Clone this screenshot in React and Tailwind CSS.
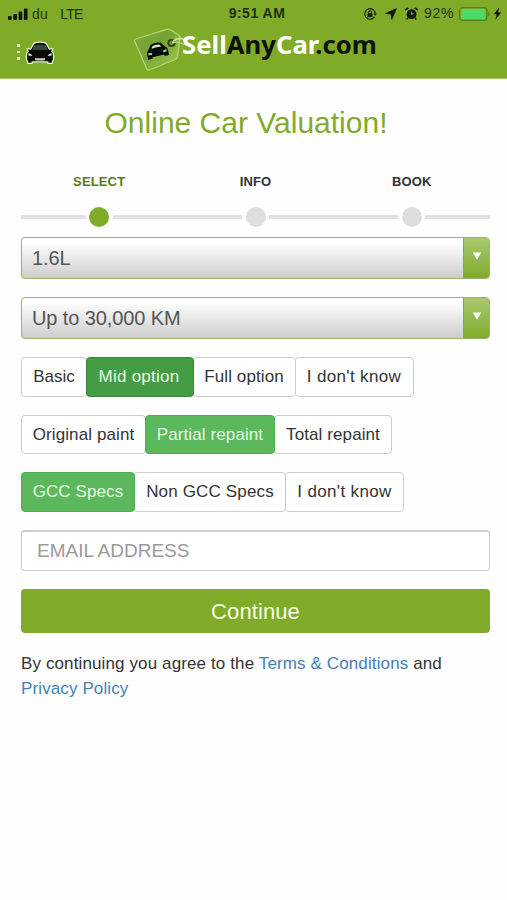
import { useState } from 'react'

const STEPS = ['SELECT', 'INFO', 'BOOK'];

const OPTION_GROUPS = [
    {
        id: 'trim',
        items: [
            { label: 'Basic', width: 'w-[66px]' },
            { label: 'Mid option', width: 'w-[108px] tracking-[0.25px] -indent-[2px]' },
            { label: 'Full option', width: 'w-[103px] tracking-[0.1px] -indent-[1px]' },
            { label: "I don't know", width: 'w-[119px] tracking-[0.35px] -indent-[1px]' },
        ],
        active: 'relative z-10 border-[#398439] bg-[#449d44] text-[#e6f9e0]',
    },
    {
        id: 'paint',
        items: [
            { label: 'Original paint', width: 'w-[125px] tracking-[0.1px]' },
            { label: 'Partial repaint', width: 'w-[130px] tracking-[0.1px]' },
            { label: 'Total repaint', width: 'w-[118px] tracking-[0.1px]' },
        ],
        active: 'relative z-10 border-[#4cae4c] bg-[#5cb85c] text-[#e6f9e0]',
    },
    {
        id: 'specs',
        items: [
            { label: 'GCC Specs', width: 'w-[114px] tracking-[0.1px]' },
            { label: 'Non GCC Specs', width: 'w-[152px] tracking-[0.15px]' },
            { label: "I don't know", width: 'w-[119px] tracking-[0.35px]' },
        ],
        active: 'relative z-10 border-[#4cae4c] bg-[#5cb85c] text-[#e6f9e0]',
    },
];

const StatusBar = () => (
    <div className="relative flex h-[27px] items-center text-[14px] text-[#20310a]">
        <svg className="ml-[8px] mt-px" width="20" height="12" viewBox="0 0 20 12" fill="#0d1503">
            <rect x="0" y="8" width="3.6" height="4" rx="1" />
            <rect x="5.3" y="6" width="3.6" height="6" rx="1" />
            <rect x="10.6" y="3.5" width="3.6" height="8.5" rx="1" />
            <rect x="15.9" y="0.5" width="3.6" height="11.5" rx="1" />
        </svg>
        <span className="ml-[4px] mt-px tracking-[0.3px]">du</span>
        <span className="ml-[12px] mt-px text-[14px] tracking-[-0.8px]">LTE</span>
        <span className="absolute inset-x-0 top-[3px] pl-[7px] text-center text-[14px] font-bold leading-[21px] tracking-[0.5px]">9:51 AM</span>

        <div className="ml-auto flex items-center pr-[5px]">
            {/* rotation lock */}
            <svg width="14" height="14" viewBox="0 0 14 14" fill="none" stroke="#16220a" strokeWidth="1.2">
                <path d="M11.4 9.9A5.3 5.3 0 1 1 12.3 6.6" />
                <path d="M10.4 6.4h3.4l-1.7 2.3z" fill="#16220a" stroke="none" />
                <path d="M5.5 6.5V5.2a1.5 1.5 0 0 1 3 0v1.3" strokeWidth="1" />
                <rect x="4.5" y="6.2" width="5" height="3.8" rx="0.5" fill="#16220a" stroke="none" />
            </svg>
            {/* location */}
            <svg className="ml-[8px]" width="12" height="12" viewBox="0 0 12 12" fill="#0d1503" stroke="#0d1503" strokeWidth="0.7" strokeLinejoin="round">
                <path d="M11.4 0.6 6.8 11.4 6 6 0.6 5.4z" />
            </svg>
            {/* alarm */}
            <svg className="ml-[8px]" width="13" height="13" viewBox="0 0 13 13" fill="#0d1503">
                <circle cx="6.5" cy="7.2" r="4.9" />
                <path d="M0.5 3.7A2.2 2.2 0 0 1 4 1.2zM12.5 3.7A2.2 2.2 0 0 0 9 1.2z" />
                <path d="M2.9 10.6 1.9 12.5M10.1 10.6l1 1.9" stroke="#0d1503" strokeWidth="1.4" />
                <path d="M6.5 4.5V7.5L8.5 6.5" fill="none" stroke="#80ab29" strokeWidth="1" />
            </svg>
            <span className="ml-[6px] w-[31px] whitespace-nowrap text-[14px] tracking-[0.7px]">92%</span>
            <svg className="ml-[4px]" width="31" height="14" viewBox="0 0 31 14">
                <rect x="0.7" y="0.7" width="27" height="12.6" rx="2.5" fill="none" stroke="#57801b" strokeWidth="1.3" />
                <rect x="2" y="2" width="24.4" height="10" rx="1.2" fill="#4fdb63" />
                <path d="M28.9 4.6a2.6 2.6 0 0 1 0 4.8z" fill="#57801b" />
            </svg>
            <svg className="ml-[3px]" width="9" height="13" viewBox="0 0 8 13" fill="#0d1503">
                <path d="M5.6 0.5 0.2 7.2h3L2 12.5 7.8 5.5H4.7z" />
            </svg>
        </div>
    </div>
);

const CarIcon = () => (
    <svg width="30" height="24" viewBox="0 0 30 24">
        <path
            d="M8.200 3.300Q9.500 1.200 15 1.200T21.800 3.300L24.400 8.200 26.200 7.500Q28 7.600 27.600 9.300L26.800 10.200Q28.500 11.500 28.500 14V18.500Q28.500 20 27.400 20.200V22.300H22.800V20.900H7.200V22.300H2.600V20.200Q1.500 20 1.500 18.500V14Q1.500 11.500 3.200 10.200L2.400 9.300Q2 7.600 3.800 7.500L5.600 8.200z"
            fill="#080a08"
            stroke="#e8f5cf"
            strokeWidth="1.300"
            strokeLinejoin="round"
        />
        <path d="M9.200 4.500Q15 2.500 20.800 4.500L23 9H7z" fill="#33483d" />
        <path d="M3.200 12.300q3.200.3 4.300 2.500l-3.900-.1zM26.800 12.300q-3.200.3-4.300 2.500l3.900-.1z" fill="#dcebc8" />
        <path d="M9.800 17.300h10.400l-.8 2.200h-8.800z" fill="#c9d8c2" />
    </svg>
);

const TagLogo = () => (
    <svg className="shrink-0" width="60" height="46" viewBox="0 0 60 46">
        <defs>
            <linearGradient id="tag" x1="0" y1="0" x2="1" y2="1">
                <stop offset="0" stopColor="#7fa93a" />
                <stop offset="0.45" stopColor="#75a333" />
                <stop offset="1" stopColor="#a4cb55" />
            </linearGradient>
        </defs>
        <path
            d="M2.8 12 33.5 2.3q2-.6 3.6.4l8.3 5q1.7 1.2 1.5 3.2l-2.5 18.8q-.3 2-2.2 2.8L16.5 43q-1.9.7-2.7-1.1L1.700 14.200q-.7-1.600 1.100-2.200z"
            fill="url(#tag)"
            stroke="#b3d373"
            strokeWidth="1.3"
        />
        <g transform="translate(11 18) rotate(-13) scale(0.77)">
            <path d="M4 8 8 2Q15-1 22 2l4 6q3 1.500 3 5v7h-6v-2H7v2H1v-7q0-3.500 3-5z" fill="#080c06" />
            <path d="M8.500 7 10.500 3.800q4.500-1.400 9 0l2 3.200Q15 5.800 8.500 7z" fill="#d9e8c0" />
            <path d="M3 11.500l5 1.200-1 2.300-4-.8zM27 11.500l-5 1.200 1 2.300 4-.8z" fill="#bed697" />
        </g>
        <circle cx="38.5" cy="16" r="3.2" fill="#718f38" stroke="#2d4413" strokeWidth="1.8" />
        <path d="M39.5 16C43 9.500 51 10.500 54.500 16" fill="none" stroke="#c8dca0" strokeWidth="1.8" />
        <path d="M40.5 16C46 12.500 51 20 58 18.500" fill="none" stroke="#b9d386" strokeWidth="1.3" />
    </svg>
);

const Header = () => (
    <header className="h-[79px] border-b border-[#a9c66e] bg-[#80ab29]">
        <StatusBar />
        <div className="flex items-start">
            <div className="ml-[17px] mt-[17px] flex flex-col gap-[4px]">
                <div className="h-[2.5px] w-[2.5px] bg-[#e4f3c4]"></div>
                <div className="h-[2.5px] w-[2.5px] bg-[#e4f3c4]"></div>
                <div className="h-[2.5px] w-[2.5px] bg-[#e4f3c4]"></div>
            </div>
            <div className="ml-[5.5px] mt-[14px]"><CarIcon /></div>
            <div className="ml-[78px] flex items-start">
                <TagLogo />
                <div className="-ml-[11px] mt-px whitespace-nowrap font-['Noto_Sans'] text-[25.7px] font-bold leading-[33px] text-[#0c1206]">
                    <span className="text-white">Sell</span>Any<span className="text-white">Car</span>.com
                </div>
            </div>
        </div>
    </header>
);

const Stepper = ({ current }) => (
    <div className="grid grid-cols-3">
        {STEPS.map((step, i) => (
            <div key={step} className="flex flex-col items-center">
                <div className={`text-[13px] font-bold leading-[18px] tracking-[0.15px] ${i === current ? 'text-[#587d18]' : 'text-[#333333]'}`}>{step}</div>
                <div className="mt-[16px] flex w-full items-center">
                    <div className="h-[4px] flex-1 bg-[#e0e0e0]"></div>
                    <div className={`mx-[3.5px] h-[20px] w-[20px] rounded-full ${i === current ? 'bg-[#80ab29]' : 'bg-[#dedede]'}`}></div>
                    <div className="h-[4px] flex-1 bg-[#e0e0e0]"></div>
                </div>
            </div>
        ))}
    </div>
);

const SelectBox = ({ value }) => (
    <div className="flex h-[42px] overflow-hidden rounded-[4px] border border-[#98b568] bg-linear-to-b from-white from-10% to-[#cdcdcd]">
        <div className="flex-1 pl-[10px] text-[20px] leading-[41px] tracking-[-0.1px] text-[#555555]">{value}</div>
        <div className="flex w-[26px] justify-center border-l border-[#86a550] bg-linear-to-b from-[#a9c96d] to-[#80ab29] pt-[14px]">
            <svg width="10" height="8" viewBox="0 0 10 8"><path d="M0.8 0.5h8.4L5 7.8z" fill="#ffffff" /></svg>
        </div>
    </div>
);

const OptionGroup = ({ group, selected, onSelect }) => (
    <div className="flex h-[39.5px] pl-px">
        {group.items.map((item) => (
            <button
                key={item.label}
                type="button"
                onClick={() => onSelect(item.label)}
                className={`${item.width} -ml-px shrink-0 whitespace-nowrap rounded-[4px] border text-[17px] leading-[37px] ${selected === item.label ? group.active : 'border-[#cccccc] bg-white text-[#333333]'}`}
            >
                {item.label}
            </button>
        ))}
    </div>
);

const App = () => {
    const [options, setOptions] = useState({
        trim: 'Mid option',
        paint: 'Partial repaint',
        specs: 'GCC Specs',
    });
    const [email, setEmail] = useState('');

    return (
        <div className="h-[900px] w-[507px] overflow-hidden bg-[#fefefe] font-['Liberation_Sans',sans-serif] text-[#333333]">
            <Header />

            <main className="pl-[21px] pr-[17px]">
                <h1 className="pr-[19px] pt-[26px] text-center text-[30px] leading-[36px] text-[#80ab29]">Online Car Valuation!</h1>

                <div className="mt-[32px]">
                    <Stepper current={0} />
                </div>

                <div className="mt-[10px] flex flex-col gap-[18px]">
                    <SelectBox value="1.6L" />
                    <SelectBox value="Up to 30,000 KM" />
                    {OPTION_GROUPS.map((group) => (
                        <OptionGroup
                            key={group.id}
                            group={group}
                            selected={options[group.id]}
                            onSelect={(label) => setOptions({ ...options, [group.id]: label })}
                        />
                    ))}
                    <input
                        type="email"
                        className="h-[41.4px] rounded-[4px] border border-t-2 border-[#cccccc] bg-white pl-[15px] text-[19px] outline-none placeholder:text-[#999999]"
                        placeholder="EMAIL ADDRESS"
                        value={email}
                        onChange={(e) => setEmail(e.target.value)}
                    />
                    <button type="button" className="h-[44px] rounded-[4px] bg-[#80ab29] pt-px text-[22px] tracking-[0.1px] text-[#f6ffe4]">Continue</button>
                </div>

                <p className="mt-[18.6px] text-[17px] leading-[25px] tracking-[0.12px]">
                    By continuing you agree to the <a className="text-[#4281b8]">Terms &amp; Conditions</a> and{' '}
                    <a className="text-[#4281b8]">Privacy Policy</a>
                </p>
            </main>
        </div>
    );
};

export default App;
